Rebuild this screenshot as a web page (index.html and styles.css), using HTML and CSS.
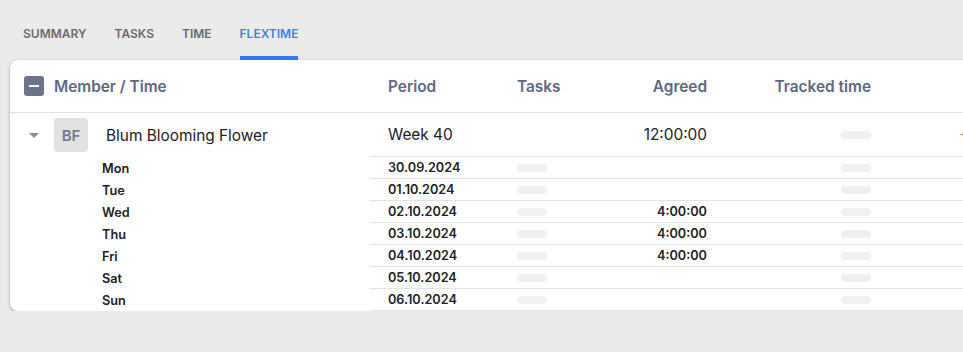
FILE: index.html
```html
<!DOCTYPE html>
<html>
<head>
    <meta charset="UTF-8">
    <meta name="viewport" content="width=device-width, initial-scale=1.0">
    <title>Flextime</title>
    <link rel="stylesheet" href="styles.css">
</head>
<body>
    <nav class="tabs">
        <a class="tab">Summary</a>
        <a class="tab">Tasks</a>
        <a class="tab">Time</a>
        <a class="tab active">Flextime</a>
    </nav>

    <div class="card">
        <div class="row head">
            <div class="cell first">
                <span class="check"><span class="check-bar"></span></span>
                Member / Time
            </div>
            <div class="cell pad-l">Period</div>
            <div class="cell pad-l">Tasks</div>
            <div class="cell pad-r">Agreed</div>
            <div class="cell pad-r">Tracked time</div>
            <div class="cell"></div>
        </div>

        <div class="row member">
            <div class="cell first">
                <span class="caret"></span>
                <span class="avatar">BF</span>
                <span class="member-name">Blum Blooming Flower</span>
            </div>
            <div class="cell pad-l line">Week 40</div>
            <div class="cell pad-l line"></div>
            <div class="cell pad-r line">12:00:00</div>
            <div class="cell pad-r line"><span class="pill"></span></div>
            <div class="cell line"><span class="diff">-12:00:00</span></div>
        </div>

        <div class="row day">
            <div class="cell day-name">Mon</div>
            <div class="cell pad-l line">30.09.2024</div>
            <div class="cell pad-l line"><span class="pill"></span></div>
            <div class="cell pad-r line"></div>
            <div class="cell pad-r line"><span class="pill"></span></div>
            <div class="cell line"></div>
        </div>
        <div class="row day">
            <div class="cell day-name">Tue</div>
            <div class="cell pad-l line">01.10.2024</div>
            <div class="cell pad-l line"><span class="pill"></span></div>
            <div class="cell pad-r line"></div>
            <div class="cell pad-r line"><span class="pill"></span></div>
            <div class="cell line"></div>
        </div>
        <div class="row day">
            <div class="cell day-name">Wed</div>
            <div class="cell pad-l line">02.10.2024</div>
            <div class="cell pad-l line"><span class="pill"></span></div>
            <div class="cell pad-r line">4:00:00</div>
            <div class="cell pad-r line"><span class="pill"></span></div>
            <div class="cell line"></div>
        </div>
        <div class="row day">
            <div class="cell day-name">Thu</div>
            <div class="cell pad-l line">03.10.2024</div>
            <div class="cell pad-l line"><span class="pill"></span></div>
            <div class="cell pad-r line">4:00:00</div>
            <div class="cell pad-r line"><span class="pill"></span></div>
            <div class="cell line"></div>
        </div>
        <div class="row day">
            <div class="cell day-name">Fri</div>
            <div class="cell pad-l line">04.10.2024</div>
            <div class="cell pad-l line"><span class="pill"></span></div>
            <div class="cell pad-r line">4:00:00</div>
            <div class="cell pad-r line"><span class="pill"></span></div>
            <div class="cell line"></div>
        </div>
        <div class="row day">
            <div class="cell day-name">Sat</div>
            <div class="cell pad-l line">05.10.2024</div>
            <div class="cell pad-l line"><span class="pill"></span></div>
            <div class="cell pad-r line"></div>
            <div class="cell pad-r line"><span class="pill"></span></div>
            <div class="cell line"></div>
        </div>
        <div class="row day">
            <div class="cell day-name">Sun</div>
            <div class="cell pad-l line">06.10.2024</div>
            <div class="cell pad-l line"><span class="pill"></span></div>
            <div class="cell pad-r line"></div>
            <div class="cell pad-r line"><span class="pill"></span></div>
            <div class="cell line"></div>
        </div>
    </div>
</body>
</html>
```

FILE: styles.css
```css
body {
    margin: 0;
    background-color: #ebebeb;
    font-family: Inter, "Liberation Sans", sans-serif;
    color: #222;
    overflow: hidden;
}
.tabs {
    display: flex;
    gap: 28px;
    padding-left: 23px;
    height: 60px;
}
.tab {
    padding-top: 26px;
    padding-bottom: 14px;
    line-height: 16px;
    font-size: 12px;
    font-weight: 600;
    text-transform: uppercase;
    color: #6a6a6a;
    border-bottom: 4px solid transparent;
}
.tab.active {
    color: #3d7ff0;
    border-bottom-color: #3478f6;
}
.card {
    margin-left: 10px;
    width: 1200px;
    background-color: white;
    border-radius: 8px 0 0 8px;
    box-shadow: 0 1px 3px rgba(0, 0, 0, 0.35);
}
.row {
    display: grid;
    grid-template-columns: 360px 130px 100px 125px 164px 321px;
}
.cell {
    display: flex;
    align-items: center;
    white-space: nowrap;
    overflow: hidden;
}
.pad-l {
    padding-left: 17px;
}
.pad-r {
    justify-content: flex-end;
    padding-right: 18px;
}
.head {
    height: 52px;
    border-bottom: 1px solid #e2e2e2;
    font-size: 15.4px;
    font-weight: 600;
    color: #5d6882;
}
.head .cell:nth-child(2) {
    padding-left: 18px;
}
.first {
    padding-left: 14px;
}
.check {
    width: 20px;
    height: 20px;
    border-radius: 3px;
    background-color: #6b7488;
    display: flex;
    align-items: center;
    justify-content: center;
    margin-right: 10px;
}
.check-bar {
    width: 10px;
    height: 2px;
    background-color: white;
}
.line {
    border-bottom: 1px solid #e2e2e2;
}
.member {
    height: 44px;
    font-size: 15.4px;
}
.member .cell:nth-child(2) {
    padding-left: 18px;
}
.member .first {
    padding-left: 19px;
}
.caret {
    width: 0;
    height: 0;
    border-left: 5px solid transparent;
    border-right: 5px solid transparent;
    border-top: 5px solid #8d8d8d;
    margin-right: 15px;
}
.avatar {
    width: 34px;
    height: 34px;
    border-radius: 4px;
    background-color: #e2e2e2;
    color: #6e7893;
    font-weight: 600;
    font-size: 15px;
    display: flex;
    align-items: center;
    justify-content: center;
    margin-right: 18px;
}
.diff {
    padding-left: 71px;
    color: #ef7f55;
}
.day {
    height: 22px;
    font-size: 12.7px;
    font-weight: 600;
}
.day .cell:nth-child(2) {
    padding-left: 18px;
}
.day-name {
    padding-left: 92px;
}
.pill {
    display: inline-block;
    width: 30px;
    height: 8px;
    border-radius: 4px;
    background-color: #f1f1f1;
}
```
